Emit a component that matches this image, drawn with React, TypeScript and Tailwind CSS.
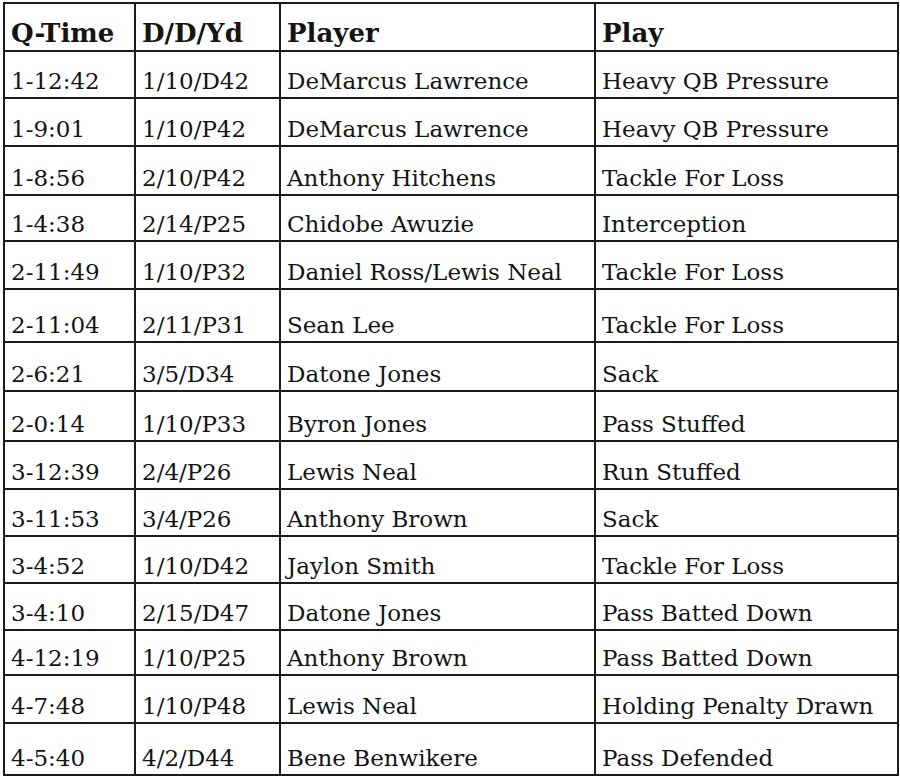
const rows: [string, string, string, string, number][] = [
  ['1-12:42', '1/10/D42', 'DeMarcus Lawrence', 'Heavy QB Pressure', 47],
  ['1-9:01', '1/10/P42', 'DeMarcus Lawrence', 'Heavy QB Pressure', 48],
  ['1-8:56', '2/10/P42', 'Anthony Hitchens', 'Tackle For Loss', 49],
  ['1-4:38', '2/14/P25', 'Chidobe Awuzie', 'Interception', 46],
  ['2-11:49', '1/10/P32', 'Daniel Ross/Lewis Neal', 'Tackle For Loss', 48],
  ['2-11:04', '2/11/P31', 'Sean Lee', 'Tackle For Loss', 53],
  ['2-6:21', '3/5/D34', 'Datone Jones', 'Sack', 49],
  ['2-0:14', '1/10/P33', 'Byron Jones', 'Pass Stuffed', 50],
  ['3-12:39', '2/4/P26', 'Lewis Neal', 'Run Stuffed', 48],
  ['3-11:53', '3/4/P26', 'Anthony Brown', 'Sack', 47],
  ['3-4:52', '1/10/D42', 'Jaylon Smith', 'Tackle For Loss', 47],
  ['3-4:10', '2/15/D47', 'Datone Jones', 'Pass Batted Down', 47],
  ['4-12:19', '1/10/P25', 'Anthony Brown', 'Pass Batted Down', 45],
  ['4-7:48', '1/10/P48', 'Lewis Neal', 'Holding Penalty Drawn', 48],
  ['4-5:40', '4/2/D44', 'Bene Benwikere', 'Pass Defended', 52],
];

const cell =
  'border-2 border-[#1c1c1c] align-bottom pl-[6px] pb-[4px] leading-[24px] whitespace-nowrap';

export default function App() {
  return (
    <div className="min-h-screen bg-white pt-[2px] pl-[3px] text-[#141414] font-['DejaVu_Serif','Liberation_Serif',serif] text-[23px]">
      <table className="table-fixed border-collapse w-[894px]">
        <colgroup>
          <col className="w-[131px]" />
          <col className="w-[145px]" />
          <col className="w-[315px]" />
          <col className="w-[303px]" />
        </colgroup>
        <thead>
          <tr className="h-[48px] text-left font-bold text-[26px]">
            <th className={cell + ' leading-[26px]'}>Q-Time</th>
            <th className={cell + ' leading-[26px]'}>D/D/Yd</th>
            <th className={cell + ' leading-[26px]'}>Player</th>
            <th className={cell + ' leading-[26px]'}>Play</th>
          </tr>
        </thead>
        <tbody>
          {rows.map(([time, down, player, play, h]) => (
            <tr key={time} style={{ height: h }}>
              <td className={cell}>{time}</td>
              <td className={cell}>{down}</td>
              <td className={cell}>{player}</td>
              <td className={cell}>{play}</td>
            </tr>
          ))}
        </tbody>
      </table>
    </div>
  );
}
